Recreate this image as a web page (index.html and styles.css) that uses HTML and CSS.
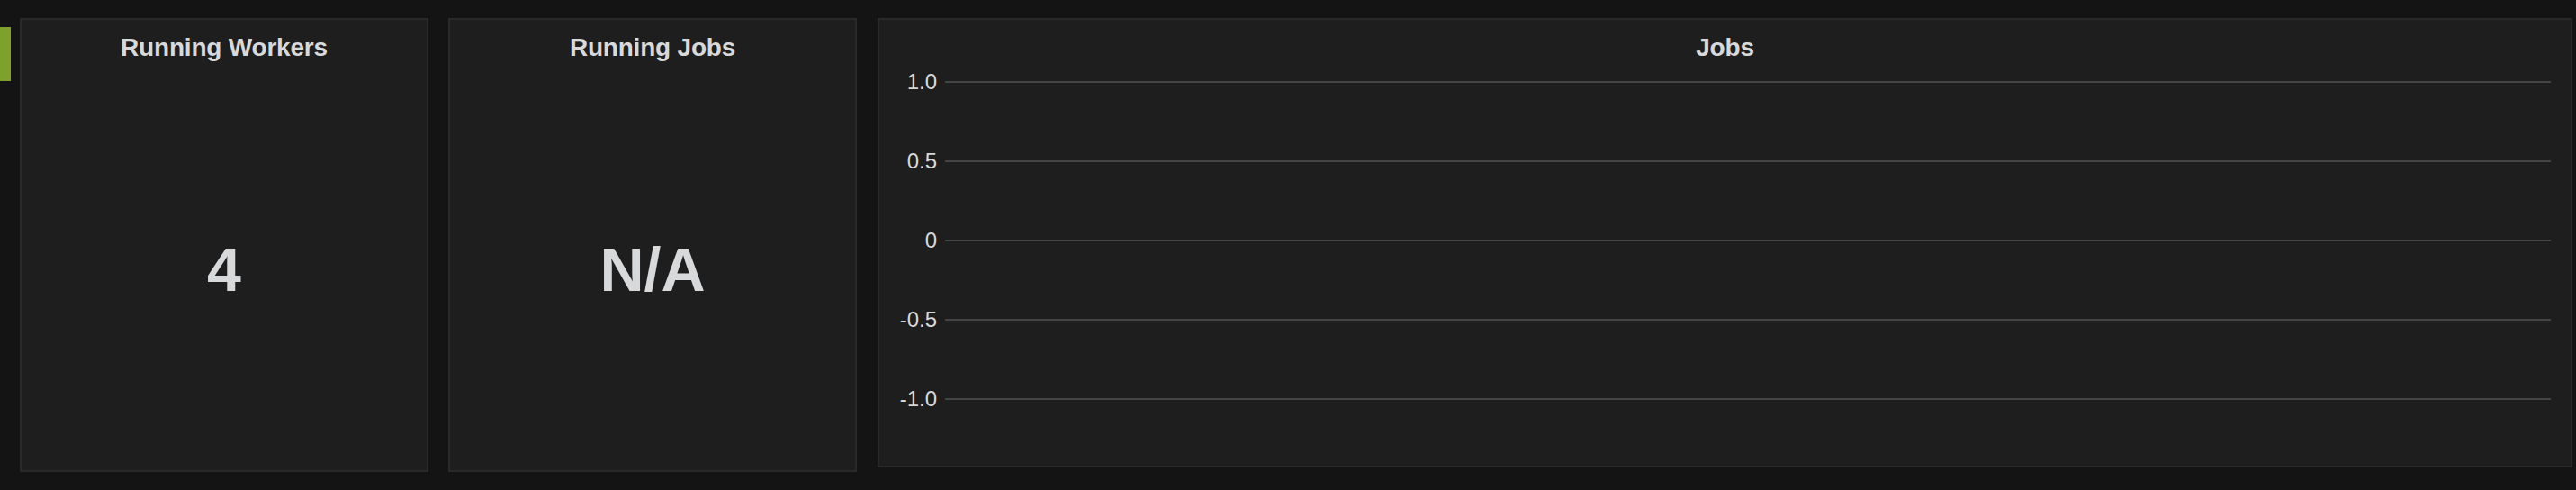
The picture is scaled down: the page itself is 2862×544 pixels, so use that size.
FILE: index.html
```html
<!DOCTYPE html>
<html>
<head>
<meta charset="utf-8">
<link rel="stylesheet" href="styles.css">
</head>
<body>
<div class="row">
  <div class="row-marker"></div>
  <div class="panels">
    <div class="panel panel-stat">
      <div class="panel-title">Running Workers</div>
      <div class="stat-value">4</div>
    </div>
    <div class="panel panel-stat">
      <div class="panel-title">Running Jobs</div>
      <div class="stat-value">N/A</div>
    </div>
    <div class="panel panel-graph">
      <div class="panel-title">Jobs</div>
      <div class="chart">
        <div class="grid-row"><span class="tick">1.0</span><span class="grid-line"></span></div>
        <div class="grid-row"><span class="tick">0.5</span><span class="grid-line"></span></div>
        <div class="grid-row"><span class="tick">0</span><span class="grid-line"></span></div>
        <div class="grid-row"><span class="tick">-0.5</span><span class="grid-line"></span></div>
        <div class="grid-row"><span class="tick">-1.0</span><span class="grid-line"></span></div>
      </div>
    </div>
  </div>
</div>
</body>
</html>
```

FILE: styles.css
```css
html, body {
  margin: 0;
  padding: 0;
  background: #141414;
  height: 100%;
}
body {
  font-family: "Liberation Sans", Arial, Helvetica, sans-serif;
  color: #d8d9da;
}
.row {
  display: flex;
  align-items: flex-start;
  padding-top: 20px;
  padding-right: 4px;
}
.row-marker {
  width: 12px;
  height: 60px;
  margin-top: 10px;
  margin-right: 10px;
  background: #7ea12b;
  flex: none;
}
.panels {
  display: flex;
  align-items: flex-start;
  gap: 22px;
  flex: 1;
}
.panel {
  box-sizing: border-box;
  background: #1f1e1f;
  border: 2px solid #292929;
  display: flex;
  flex-direction: column;
}
.panel-stat {
  width: 454px;
  height: 504px;
  flex: none;
}
.panel-graph {
  flex: 1;
  height: 499px;
  margin-left: 1px;
}
.panel-title {
  padding-top: 15px;
  font-size: 28px;
  line-height: 32px;
  font-weight: bold;
  text-align: center;
  letter-spacing: -0.2px;
}
.stat-value {
  margin-top: 190px;
  font-size: 68px;
  line-height: 80px;
  font-weight: bold;
  text-align: center;
}
.chart {
  margin-top: 7px;
  padding-right: 22px;
  display: flex;
  flex-direction: column;
  gap: 58px;
}
.grid-row {
  display: flex;
  align-items: center;
  height: 30px;
}
.tick {
  width: 64px;
  flex: none;
  text-align: right;
  font-size: 24px;
  line-height: 30px;
  color: #d8d9da;
}
.grid-line {
  flex: 1;
  height: 2px;
  margin-left: 9px;
  background: #444444;
}
```
